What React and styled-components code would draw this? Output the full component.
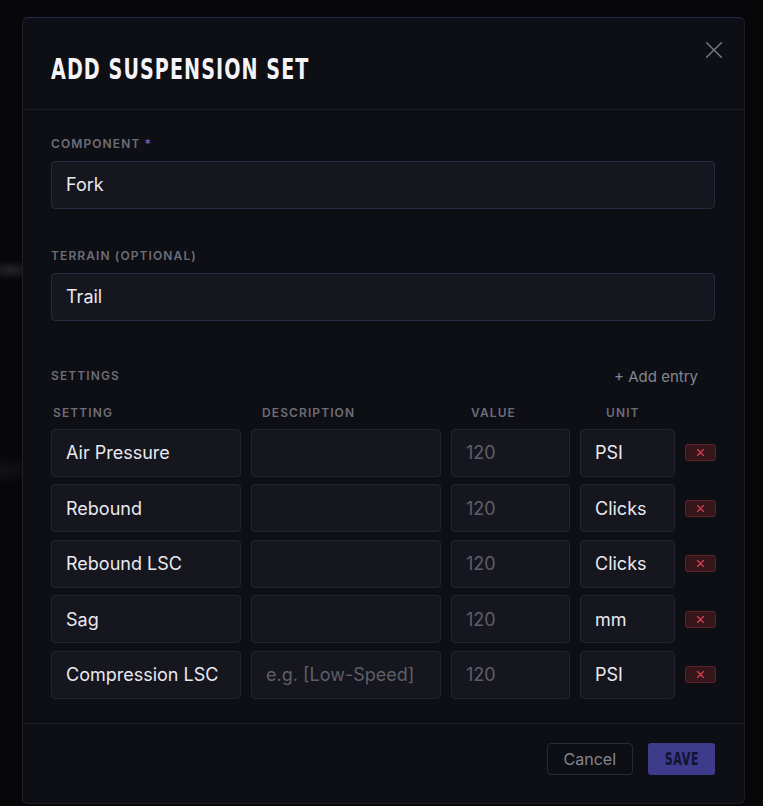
import React from "react";
import styled, { createGlobalStyle } from "styled-components";

const GlobalStyle = createGlobalStyle`
  html, body {
    margin: 0;
    padding: 0;
    background: #070709;
  }
  body {
    font-family: Inter, "Noto Sans", sans-serif;
    -webkit-font-smoothing: antialiased;
  }
  * {
    box-sizing: border-box;
  }
`;

const Backdrop = styled.div`
  width: 763px;
  height: 806px;
  padding: 17px 18px 2px 22px;
  background:
    radial-gradient(ellipse 30px 10px at 10px 270px, rgba(120, 120, 130, 0.25), transparent),
    radial-gradient(ellipse 40px 14px at 0px 470px, rgba(90, 90, 100, 0.15), transparent),
    #070709;
  overflow: hidden;
`;

const Modal = styled.div`
  position: relative;
  height: 787px;
  background: #0e0e15;
  border: 1px solid #1d1d27;
  border-top-color: #2a2750;
  border-radius: 6px;
  display: flex;
  flex-direction: column;
`;

const Header = styled.div`
  height: 93px;
  padding: 0 28px;
  display: flex;
  align-items: center;
  border-bottom: 1px solid #1e1e29;
`;

const Condensed = styled.span`
  display: inline-block;
  font-family: "Liberation Sans Narrow", "DejaVu Sans", sans-serif;
  font-stretch: condensed;
  font-weight: 700;
  transform: scaleX(${(p) => p.squeeze || 0.78});
  transform-origin: ${(p) => p.origin || "left center"};
`;

const Title = styled.h2`
  margin: 11px 0 0;
  font-size: 28px;
  letter-spacing: 1.4px;
  color: #f4f4f7;
  font-weight: 700;
`;

const CloseButton = styled.button`
  position: absolute;
  top: 19px;
  right: 17px;
  width: 26px;
  height: 26px;
  padding: 0;
  border: none;
  background: transparent;
  color: #7c7c86;
  display: flex;
  align-items: center;
  justify-content: center;
`;

const Body = styled.div`
  flex: 1;
  padding: 26px 29px 24px 28px;
  display: flex;
  flex-direction: column;
  border-bottom: 1px solid #1e1e29;
`;

const Field = styled.div`
  display: flex;
  flex-direction: column;
  margin-bottom: ${(p) => p.mb || 0}px;
`;

const Label = styled.div`
  font-size: 12px;
  line-height: 16px;
  font-weight: 600;
  letter-spacing: 1.1px;
  color: #6d6d77;
  text-transform: uppercase;
  margin-bottom: ${(p) => p.mb || 0}px;
`;

const Required = styled.span`
  color: #6a62cf;
  margin-left: 4px;
`;

const Input = styled.div`
  height: 48px;
  display: flex;
  align-items: center;
  padding: 0 14px;
  background: #16161f;
  border: 1px solid ${(p) => (p.accent ? "#2a2840" : "#24242f")};
  border-radius: 4px;
  font-size: 18px;
  color: ${(p) => (p.muted ? "#5f5f69" : "#e9e9ee")};
  white-space: nowrap;
  overflow: hidden;
`;

const SettingsHead = styled.div`
  display: flex;
  justify-content: space-between;
  align-items: center;
  margin-bottom: 19px;
`;

const AddEntry = styled.button`
  border: none;
  background: transparent;
  padding: 0 17px 0 0;
  font-family: Inter, "Noto Sans", sans-serif;
  font-size: 15px;
  color: #85858f;
`;

const ColumnHeads = styled.div`
  display: grid;
  grid-template-columns: 199px 199px 125px 1fr;
  gap: 10px;
  padding-left: 2px;
  margin-bottom: 8px;
`;

const Rows = styled.div`
  display: flex;
  flex-direction: column;
  gap: 7.5px;
`;

const Row = styled.div`
  display: grid;
  grid-template-columns: 190px 190px 119px 95px 31px;
  gap: 10px;
  align-items: center;
`;

const DeleteButton = styled.button`
  width: 31px;
  height: 17px;
  padding: 0;
  border: 1px solid #5e2229;
  border-radius: 3px;
  background: #36151b;
  color: #e0434f;
  display: flex;
  align-items: center;
  justify-content: center;
`;

const Footer = styled.div`
  height: 80px;
  padding: 0 29px 8px 28px;
  display: flex;
  align-items: center;
  justify-content: flex-end;
  gap: 15px;
`;

const CancelButton = styled.button`
  height: 32px;
  padding: 0 16px;
  background: transparent;
  border: 1px solid #2a2a34;
  border-radius: 4px;
  font-family: Inter, "Noto Sans", sans-serif;
  font-size: 16px;
  color: #85858e;
`;

const SaveButton = styled.button`
  height: 32px;
  width: 67px;
  padding: 0;
  background: #3e3a8c;
  border: none;
  border-radius: 3px;
  font-size: 17px;
  letter-spacing: 1px;
  color: #111431;
  display: flex;
  align-items: center;
  justify-content: center;
`;

const settings = [
  { name: "Air Pressure", desc: "", unit: "PSI" },
  { name: "Rebound", desc: "", unit: "Clicks" },
  { name: "Rebound LSC", desc: "", unit: "Clicks" },
  { name: "Sag", desc: "", unit: "mm" },
  { name: "Compression LSC", desc: "e.g. [Low-Speed]", unit: "PSI" },
];

const XIcon = ({ size, width }) => (
  <svg width={size} height={size} viewBox="0 0 24 24" fill="none" stroke="currentColor" strokeWidth={width} strokeLinecap="round">
    <path d="M4 4l16 16M20 4L4 20" />
  </svg>
);

export default function App() {
  return (
    <>
      <GlobalStyle />
      <Backdrop>
        <Modal>
          <Header>
            <Title>
              <Condensed squeeze={0.76}>ADD SUSPENSION SET</Condensed>
            </Title>
          </Header>
          <CloseButton>
            <XIcon size={22} width={1.5} />
          </CloseButton>
          <Body>
            <Field mb={39}>
              <Label mb={9}>
                Component<Required>*</Required>
              </Label>
              <Input accent>Fork</Input>
            </Field>
            <Field mb={46}>
              <Label mb={9}>Terrain (optional)</Label>
              <Input accent>Trail</Input>
            </Field>
            <SettingsHead>
              <Label>Settings</Label>
              <AddEntry>+ Add entry</AddEntry>
            </SettingsHead>
            <ColumnHeads>
              <Label>Setting</Label>
              <Label>Description</Label>
              <Label>Value</Label>
              <Label>Unit</Label>
            </ColumnHeads>
            <Rows>
              {settings.map((s) => (
                <Row key={s.name}>
                  <Input>{s.name}</Input>
                  <Input muted>{s.desc}</Input>
                  <Input muted>120</Input>
                  <Input>{s.unit}</Input>
                  <DeleteButton>
                    <XIcon size={9} width={3} />
                  </DeleteButton>
                </Row>
              ))}
            </Rows>
          </Body>
          <Footer>
            <CancelButton>Cancel</CancelButton>
            <SaveButton>
              <Condensed squeeze={0.72} origin="center">SAVE</Condensed>
            </SaveButton>
          </Footer>
        </Modal>
      </Backdrop>
    </>
  );
}
